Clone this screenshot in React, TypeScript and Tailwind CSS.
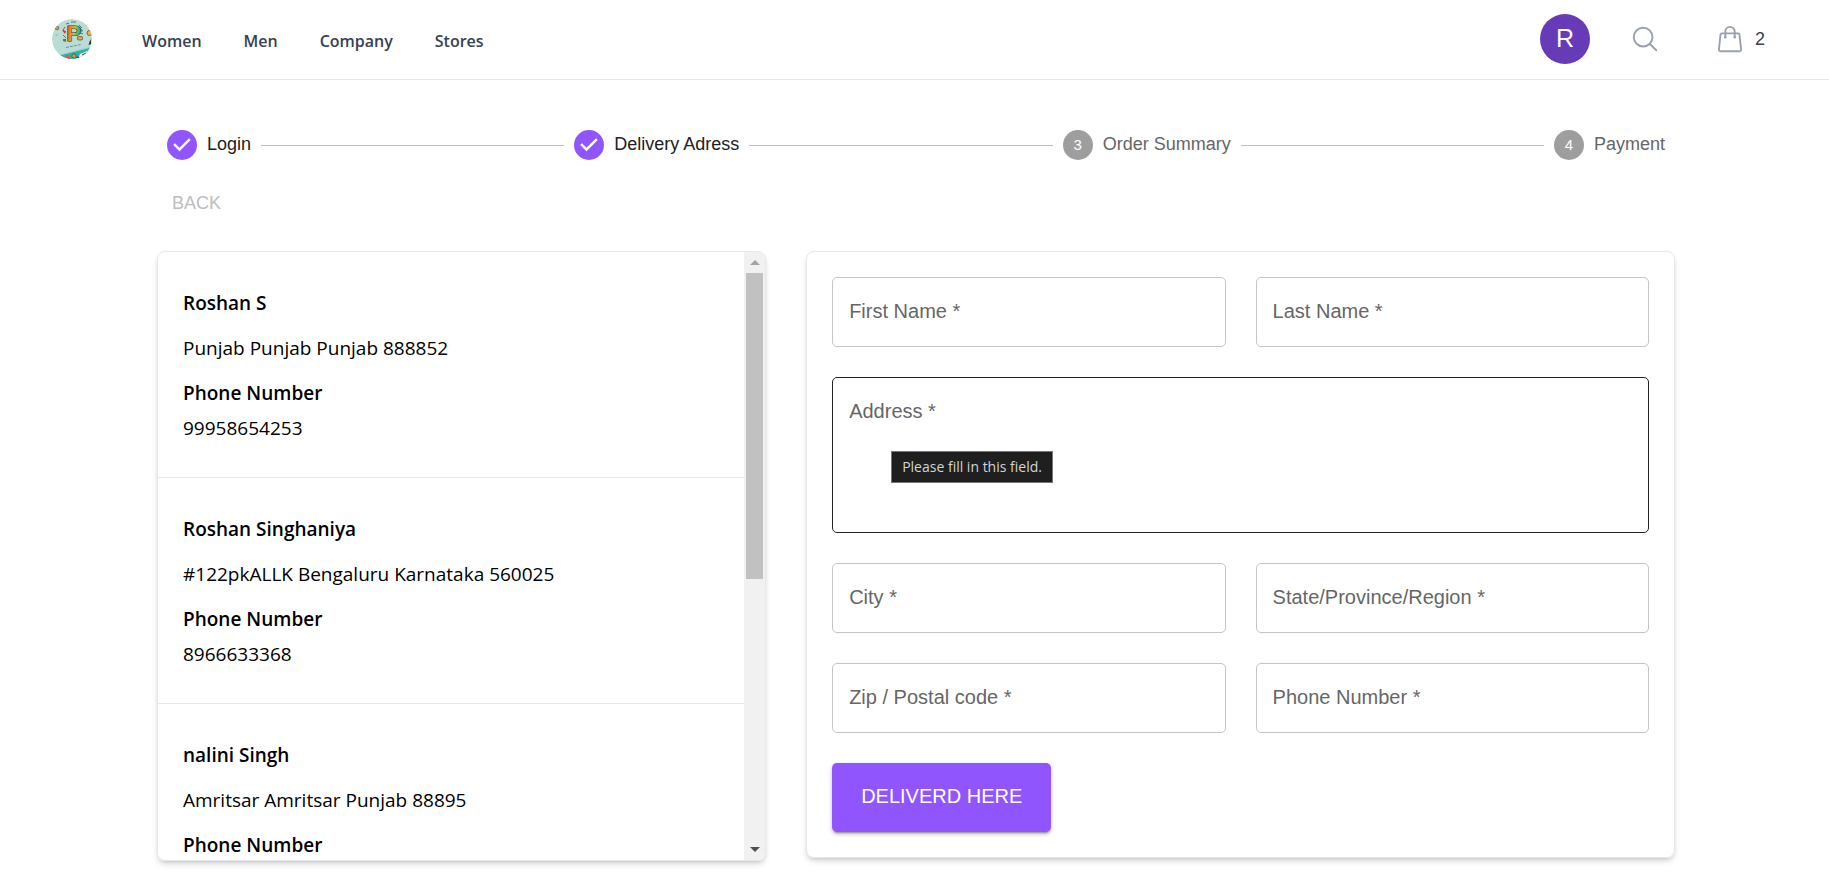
import { useId } from "react";

const sans = "font-['Liberation_Sans',Arial,sans-serif]";

function Logo() {
  return (
    <svg viewBox="0 0 40 40" className="size-10 rounded-full" role="img" aria-label="Home">
      <defs>
        <linearGradient id="logoLetter" x1="0" y1="0" x2="1" y2="0.2">
          <stop offset="0" stopColor="#e8402c" />
          <stop offset="0.35" stopColor="#f0882d" />
          <stop offset="0.6" stopColor="#a8c93d" />
          <stop offset="1" stopColor="#2fa27c" />
        </linearGradient>
        <clipPath id="logoClip">
          <circle cx="20" cy="20" r="20" />
        </clipPath>
      </defs>
      <g clipPath="url(#logoClip)">
        <rect width="40" height="40" fill="#b9dcd5" />
        <path d="M8 36L40 28v12H10z" fill="#2fb0ab" />
        <path d="M8 36l32-8" stroke="#8ad2cb" strokeWidth="1" />
        <path d="M28 35l12-5v10H26z" fill="#f3f1ee" />
        <path d="M30 36l4-2" stroke="#444" strokeWidth="1" />
        <path d="M38.500 20l-2 6 3-1z" fill="#26333b" />
        <path d="M13 8l-2 3 2 2M11 16l3 3M27 6l2 2M30 8l-2 2M14 5l3-1M19 3h5M28 14l3 1" stroke="#4a5557" strokeWidth="0.800" fill="none" />
        <path d="M10 11l4 1-1 3z" fill="#c7373a" />
        <path d="M11 20l3 0 0 3-3-1z" fill="#5c7a3c" />
        <rect x="25.500" y="17.500" width="5" height="3.500" rx="1" fill="#e7a52d" stroke="#3a3a3a" strokeWidth="0.600" />
        <circle cx="29.500" cy="11.500" r="1.300" fill="#3c9e8f" />
        <text x="14.500" y="22" fontSize="22" fontWeight="700" fill="url(#logoLetter)" stroke="#27363a" strokeWidth="1.200" paintOrder="stroke" className="font-['Liberation_Sans',sans-serif]">
          P
        </text>
        <circle cx="5" cy="9" r="1.800" fill="#d9953a" stroke="#4a4a3a" strokeWidth="0.600" />
        <circle cx="37.500" cy="14" r="2.500" fill="#e9b63a" stroke="#b3532d" strokeWidth="1" />
        <circle cx="4.500" cy="16" r="1.300" fill="#8fd0c6" />
        <path d="M14 28.500l15-3" stroke="#5f7d80" strokeWidth="0.800" strokeDasharray="3 1" />
        <circle cx="16" cy="38.500" r="2.500" fill="#ee5340" />
        <circle cx="22" cy="37" r="2.200" fill="#d79a34" stroke="#285b63" strokeWidth="0.800" />
        <circle cx="26" cy="39" r="1.500" fill="#345" />
      </g>
    </svg>
  );
}

function Header() {
  return (
    <header className="flex h-20 items-center border-b border-gray-200 pr-16 pb-px pl-[52px]">
      <a href="#home"><Logo /></a>
      <nav className="ml-[50px] flex gap-[42px] pt-[3px] font-['Open_Sans',sans-serif] text-[16px] leading-6 font-semibold text-gray-700">
        <a href="#women">Women</a>
        <a href="#men">Men</a>
        <a href="#company">Company</a>
        <a href="#stores">Stores</a>
      </nav>
      <div className="ml-auto flex items-center">
        <button className="size-[50px] rounded-full bg-[#673ab7] text-[25px] text-white">R</button>
        <button aria-label="Search" className="ml-10 text-gray-400">
          <svg viewBox="0 0 24 24" fill="none" stroke="currentColor" strokeWidth="1.5" strokeLinecap="round" strokeLinejoin="round" className="size-[30px]">
            <path d="M21 21l-5.197-5.197m0 0A7.5 7.5 0 105.196 5.196a7.5 7.5 0 0010.607 10.607z" />
          </svg>
        </button>
        <button aria-label="Cart" className="ml-[55px] flex items-center gap-2.5 text-gray-400">
          <svg viewBox="0 0 24 24" fill="none" stroke="currentColor" strokeWidth="1.5" strokeLinecap="round" strokeLinejoin="round" className="size-[30px]">
            <path d="M15.75 10.5V6a3.75 3.75 0 10-7.5 0v4.500m11.356-1.993l1.263 12c.07.665-.45 1.243-1.119 1.243H4.25a1.125 1.125 0 01-1.12-1.243l1.264-12A1.125 1.125 0 015.513 7.5h12.974c.576 0 1.059.435 1.119 1.007zM8.625 10.5a.375.375 0 11-.75 0 .375.375 0 01.75 0zm7.5 0a.375.375 0 11-.75 0 .375.375 0 01.75 0z" />
          </svg>
          <span className="text-[18px] text-gray-700">2</span>
        </button>
      </div>
    </header>
  );
}

const steps = [
  { label: "Login", done: true },
  { label: "Delivery Adress", done: true },
  { label: "Order Summary", done: false },
  { label: "Payment", done: false },
];

function Stepper() {
  return (
    <ol className="flex items-center px-2.5">
      {steps.map((step, i) => (
        <li key={step.label} className={i > 0 ? "flex flex-auto items-center" : "flex items-center"}>
          {i > 0 && <span className="mx-2.5 mt-px h-px flex-auto bg-[#bdbdbd]" />}
          {step.done ? (
            <svg viewBox="0 0 24 24" className="size-[30px] fill-[#9155fd]">
              <path d="M12 0a12 12 0 1 0 0 24 12 12 0 0 0 0-24zm-2 17l-5-5 1.4-1.4 3.6 3.6 7.6-7.6L19 8l-9 9z" />
            </svg>
          ) : (
            <span className="flex size-[30px] items-center justify-center rounded-full bg-[#9e9e9e] text-[15px] text-white">{i + 1}</span>
          )}
          <span className={step.done ? "ml-2.5 pb-0.5 text-[18px] leading-6 text-[#212121]" : "ml-2.5 pb-0.5 text-[18px] leading-6 text-[#666666]"}>{step.label}</span>
        </li>
      ))}
    </ol>
  );
}

const addresses = [
  { name: "Roshan S", address: "Punjab Punjab Punjab 888852", phone: "99958654253" },
  { name: "Roshan Singhaniya", address: "#122pkALLK Bengaluru Karnataka 560025", phone: "8966633368" },
  { name: "nalini Singh", address: "Amritsar Amritsar Punjab 88895", phone: "" },
];

const card = "rounded-lg border border-gray-200 shadow-[0_4px_6px_-1px_rgba(0,0,0,0.15),0_2px_4px_-2px_rgba(0,0,0,0.15)]";

function AddressList() {
  return (
    <section className={`col-span-5 flex h-[610px] overflow-hidden ${card}`}>
      <ul className="flex-1 divide-y divide-gray-200 overflow-y-auto font-['Open_Sans',sans-serif] text-[19px] leading-[30px] text-black [scrollbar-width:none]">
        {addresses.map((a) => (
          <li key={a.name} className="px-[25px] pt-9 pb-[34px]">
            <p className="font-semibold">{a.name}</p>
            <p className="mt-[15px]">{a.address}</p>
            <p className="mt-[15px] font-semibold">Phone Number</p>
            <p className="mt-[5px]">{a.phone}</p>
          </li>
        ))}
      </ul>
      <div aria-hidden="true" className="flex w-[21px] flex-col items-center bg-[#f1f1f1]">
        <span className="flex h-[21px] items-center">
          <svg viewBox="0 0 10 5" className="h-[5px] w-2.5 fill-[#a3a3a3]"><path d="M5 0l5 5H0z" /></svg>
        </span>
        <span className="flex w-full flex-1 flex-col items-center">
          <span className="h-[54%] w-[17px] bg-[#c1c1c1]" />
        </span>
        <span className="flex h-[21px] items-center">
          <svg viewBox="0 0 10 5" className="h-[5px] w-2.5 fill-[#505050]"><path d="M5 5l5-5H0z" /></svg>
        </span>
      </div>
    </section>
  );
}

const fieldBox = "peer block w-full rounded-[5px] border px-[17px] text-[20px] text-[#212121] outline-none";
const fieldLabel =
  "pointer-events-none absolute top-5 left-[17px] text-[20px] leading-7 text-[#666666] peer-focus:invisible peer-[:not(:placeholder-shown)]:invisible";

function Field({ label }: { label: string }) {
  const id = useId();
  return (
    <div className="relative">
      <input id={id} required placeholder=" " className={`${fieldBox} h-[70px] border-[#c4c4c4]`} />
      <label htmlFor={id} className={fieldLabel}>{label} *</label>
    </div>
  );
}

function AddressField() {
  const id = useId();
  return (
    <div className="relative col-span-2">
      <textarea id={id} required placeholder=" " className={`${fieldBox} h-[156px] resize-none border-[#212121] py-5`} />
      <label htmlFor={id} className={fieldLabel}>Address *</label>
      <div role="tooltip" className="absolute top-[74px] left-[59px] flex h-8 items-center border border-[#767676] bg-[#1f1f1f] px-2.5 pb-0.5 font-['Open_Sans',sans-serif] text-[14px] whitespace-nowrap text-[#d4d4d4]">
        Please fill in this field.
      </div>
    </div>
  );
}

export default function App() {
  return (
    <div className={`min-h-screen bg-white ${sans}`}>
      <Header />
      <main className="pt-[50px] pr-[154px] pl-[157px]">
        <Stepper />
        <button disabled className="mt-[29px] ml-[15px] block text-[18px] leading-7 text-[#bdbdbd]">BACK</button>
        <div className="mt-[34px] grid grid-cols-12 items-start gap-10">
          <AddressList />
          <form className={`col-span-7 grid grid-cols-2 gap-[30px] p-[25px] ${card}`}>
            <Field label="First Name" />
            <Field label="Last Name" />
            <AddressField />
            <Field label="City" />
            <Field label="State/Province/Region" />
            <Field label="Zip / Postal code" />
            <Field label="Phone Number" />
            <div className="col-span-2">
              <button className="block rounded-[5px] bg-[#9155fd] px-[29px] pt-[19px] pb-[22px] text-[20px] leading-7 text-white shadow-[0_3px_2px_-2px_rgba(0,0,0,0.3),0_2px_4px_rgba(0,0,0,0.25)]">
                DELIVERD HERE
              </button>
            </div>
          </form>
        </div>
      </main>
    </div>
  );
}
